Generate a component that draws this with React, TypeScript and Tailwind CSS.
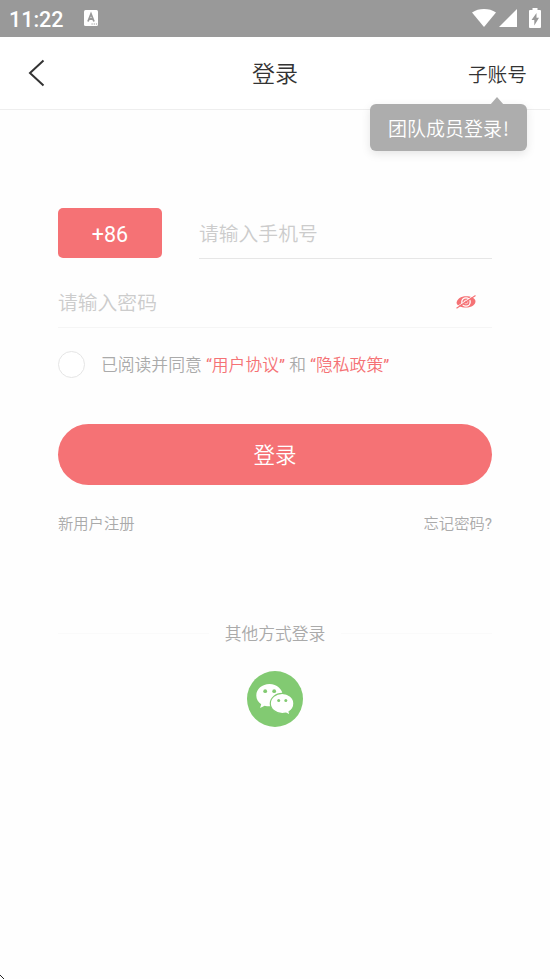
type IconProps = {
  className?: string;
};

const LABELS = {
  time: "11:22",
  title: "登录",
  subAccount: "子账号",
  tip: "团队成员登录",
  countryCode: "+86",
  phone: "请输入手机号",
  password: "请输入密码",
  agreePrefix: "已阅读并同意",
  userAgreement: "用户协议",
  and: "和",
  privacyPolicy: "隐私政策",
  submit: "登录",
  register: "新用户注册",
  forgot: "忘记密码",
  otherMethods: "其他方式登录",
};

const EyeOffIcon = ({ className }: IconProps) => (
  <svg viewBox="0 0 20 14" className={className} fill="none">
    <path d="M0.500 8C1 4 5 1.300 10 1.300S19 3 19.500 6c0 4-4 6.500-9.500 6.500S1.500 11 .500 8z" fill="#f57275" />
    <circle cx="10" cy="7" r="4.200" stroke="#fff" strokeWidth="1.300" />
    <circle cx="10" cy="7" r="1.900" stroke="#fff" strokeWidth="0.600" />
    <path d="M0 12.300L18.500 0" stroke="#fff" strokeWidth="0.900" />
    <path d="M0.500 13.300L19.500 0.500" stroke="#f57275" strokeWidth="1.100" />
  </svg>
);

const WechatIcon = ({ className }: IconProps) => (
  <svg viewBox="0 0 56 56" className={className}>
    <circle cx="28" cy="28" r="28" fill="#82ca72" />
    <path
      d="M22.500 13c-7.400 0-13.200 5-13.200 11.400 0 3.700 1.900 6.800 4.900 8.800l-1.100 3.700 4.500-2.200c1.600.400 3.200.600 4.900.600 7.400 0 13.200-4.900 13.200-10.900S29.900 13 22.500 13z"
      fill="#fff"
    />
    <path
      d="M35.200 22.400c-6.600 0-11.900 4.500-11.900 10s5.300 10.200 11.900 10.200c1.300 0 2.600-.200 3.800-.500l4.100 2.200-1-3.500c2.800-1.900 4.800-4.900 4.800-8.400 0-5.500-5.300-10-11.700-10z"
      fill="#fff"
      stroke="#82ca72"
      strokeWidth="1.200"
    />
    <g fill="#82ca72">
      <circle cx="18.200" cy="20.200" r="1.900" />
      <circle cx="27.200" cy="20.200" r="1.900" />
      <circle cx="31.700" cy="29.400" r="1.500" />
      <circle cx="38.800" cy="29.400" r="1.500" />
    </g>
  </svg>
);

const StatusBar = () => (
  <div className="flex h-[37px] shrink-0 items-center bg-[#999999] pr-[9px] pb-px pl-[9px] text-white">
    <span className="w-[75px] pt-[3px] text-[21.500px] leading-6 font-medium">{LABELS.time}</span>
    <svg viewBox="0 0 14 16" className="h-4 w-3.5">
      <rect width="14" height="16" rx="1.500" fill="#fff" />
      <path d="M4 11.500L7 4l3 7.500M5 9h4" stroke="#999" strokeWidth="1.800" fill="none" />
      <path d="M7.500 14h1.200m1 0h1.200m1 0h1.200" stroke="#999" strokeWidth="1.200" />
    </svg>
    <div className="ml-auto flex items-center">
      <svg viewBox="0 0 24 18" className="h-[18px] w-6" fill="#fff">
        <path d="M12 18L0 3.500C3.500 1 7.500 0 12 0s8.500 1 12 3.500z" />
      </svg>
      <svg viewBox="0 0 18 18" className="ml-[3px] h-[18px] w-[18px]" fill="#fff">
        <path d="M18 0v18H0z" />
      </svg>
      <svg viewBox="0 0 12 20" className="ml-3 h-5 w-3" fill="#fff">
        <path d="M3.500 0h5v2H11a1 1 0 0 1 1 1v16a1 1 0 0 1-1 1H1a1 1 0 0 1-1-1V3a1 1 0 0 1 1-1h2.500z" />
        <path d="M7.500 5L2.500 12h2.800v5.500l4.700-7.800H7.500z" fill="#999" />
      </svg>
    </div>
  </div>
);

const Header = () => (
  <header className="relative grid h-[73px] shrink-0 grid-cols-3 items-center border-b border-[#eeeeee] bg-white px-[23px] text-[#333333]">
    <button type="button" aria-label="返回" className="ml-[5px] w-fit">
      <svg viewBox="0 0 17 28" className="h-7 w-[17px]" fill="none">
        <path d="M15.500 1.500L2 14l13.500 12.500" stroke="#333" strokeWidth="2" />
      </svg>
    </button>
    <h1 className="pt-[3px] text-center text-[23px] leading-8">{LABELS.title}</h1>
    <button type="button" className="justify-self-end pt-[5px] text-[19.700px] leading-7">
      {LABELS.subAccount}
    </button>
    <div className="absolute top-[67px] right-[23px] h-[47px] w-[157px] rounded-[6px] bg-[#adadad] pl-[18px] text-[19px] leading-[47px] whitespace-nowrap text-white shadow-[0_3px_10px_rgba(0,0,0,0.1)]">
      <svg viewBox="0 0 14 8" className="absolute -top-[7px] right-[23px] h-2 w-3.5">
        <path d="M7 0l7 8H0z" fill="#adadad" />
      </svg>
      {LABELS.tip}
      <span className="ml-px font-['Noto_Sans_CJK_SC']">!</span>
    </div>
  </header>
);

const AgreementLink = ({ label }: { label: string }) => (
  <span className="text-[#f57275]">
    <span className="font-normal">“</span>
    {label}
    <span className="font-normal">”</span>
  </span>
);

const App = () => {
  return (
    <div className="relative flex h-[979px] w-[550px] flex-col overflow-hidden bg-[#fefefe] font-['Roboto','Noto_Sans_CJK_SC',sans-serif] font-[350]">
      <StatusBar />
      <Header />

      <main className="flex flex-col px-[58px] pt-[98px]">
        <div className="flex h-[51px]">
          <button type="button" className="h-[50px] w-[104px] rounded-[5px] bg-[#f57275] pt-1 text-[21.500px] font-normal text-white">
            {LABELS.countryCode}
          </button>
          <input
            type="tel"
            placeholder={LABELS.phone}
            className="ml-[37px] w-[293px] border-b border-[#e6e6e6] pt-1 text-[19.800px] outline-none placeholder:text-[#cccccc]"
          />
        </div>

        <div className="mt-[18px] flex h-[51px] items-center border-b border-[#f5f5f5]">
          <input
            type="password"
            placeholder={LABELS.password}
            className="w-[398px] pt-1 text-[19.800px] outline-none placeholder:text-[#cccccc]"
          />
          <EyeOffIcon className="h-3.5 w-5" />
        </div>

        <div className="mt-[23px] flex h-7 items-center text-[16.800px] whitespace-pre text-[#aaaaaa]">
          <span className="mr-4 mb-px size-[27px] rounded-full border-[1.500px] border-[#e5e5e5] bg-white" />
          <p className="pt-px">
            {LABELS.agreePrefix}
            <span className="font-normal"> </span>
            <AgreementLink label={LABELS.userAgreement} />
            <span className="font-normal"> </span>
            {LABELS.and}
            <span className="font-normal"> </span>
            <AgreementLink label={LABELS.privacyPolicy} />
          </p>
        </div>

        <button type="button" className="mt-[45px] h-[61px] rounded-full bg-[#f57275] pt-[3px] text-[21.500px] text-white">
          {LABELS.submit}
        </button>

        <div className="mt-[27px] flex h-6 items-center justify-between text-[15.300px] text-[#aaaaaa]">
          <span>{LABELS.register}</span>
          <span>
            {LABELS.forgot}
            <span className="font-normal">?</span>
          </span>
        </div>

        <div className="mt-[85px] flex h-6 items-center gap-4 text-[16.800px] text-[#aaaaaa]">
          <span className="h-px flex-1 bg-[#fafafa]" />
          <span className="pt-1">{LABELS.otherMethods}</span>
          <span className="h-px flex-1 bg-[#fafafa]" />
        </div>

        <button type="button" aria-label="微信登录" className="mt-[26px] self-center">
          <WechatIcon className="size-14" />
        </button>
      </main>

      <svg viewBox="0 0 4 4" className="absolute bottom-0 left-0 size-1" fill="#222">
        <path d="M0 0h1v1h1v1h1v1h1v1H3V3H2V2H1V1H0z" />
      </svg>
    </div>
  );
};

export default App;
